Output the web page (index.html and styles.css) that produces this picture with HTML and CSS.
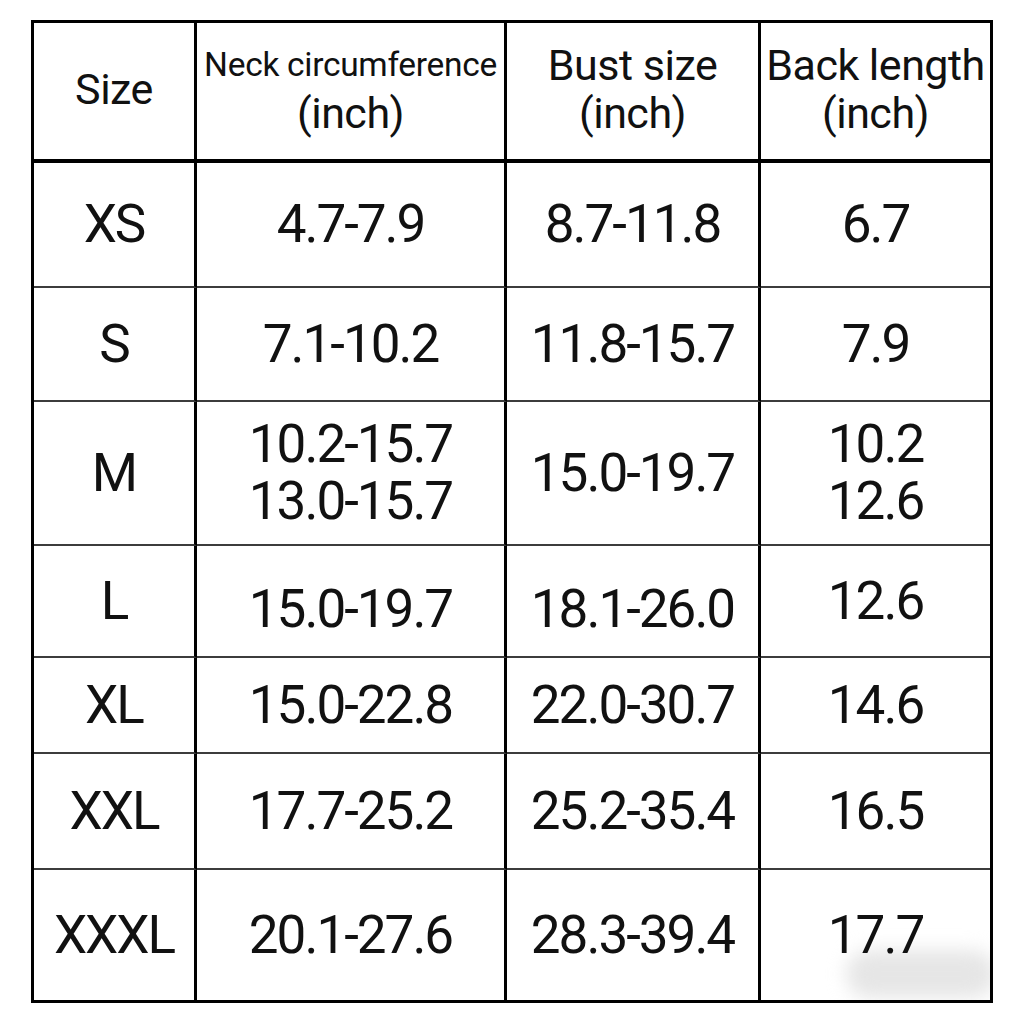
FILE: index.html
```html
<!DOCTYPE html>
<html lang="en">
<head>
<meta charset="utf-8">
<title>Size chart</title>
<link rel="stylesheet" href="styles.css">
</head>
<body>
<div class="chart">
  <div class="cell head"><span class="h-big">Size</span></div>
  <div class="cell head"><span class="h-small">Neck circumference</span><span class="h-big">(inch)</span></div>
  <div class="cell head"><span class="h-big">Bust size</span><span class="h-big">(inch)</span></div>
  <div class="cell head last"><span class="h-big">Back length</span><span class="h-big">(inch)</span></div>

  <div class="cell">XS</div>
  <div class="cell">4.7-7.9</div>
  <div class="cell">8.7-11.8</div>
  <div class="cell last">6.7</div>

  <div class="cell">S</div>
  <div class="cell">7.1-10.2</div>
  <div class="cell">11.8-15.7</div>
  <div class="cell last">7.9</div>

  <div class="cell">M</div>
  <div class="cell"><span>10.2-15.7</span><span>13.0-15.7</span></div>
  <div class="cell">15.0-19.7</div>
  <div class="cell last"><span>10.2</span><span>12.6</span></div>

  <div class="cell">L</div>
  <div class="cell low">15.0-19.7</div>
  <div class="cell low">18.1-26.0</div>
  <div class="cell last">12.6</div>

  <div class="cell">XL</div>
  <div class="cell">15.0-22.8</div>
  <div class="cell">22.0-30.7</div>
  <div class="cell last">14.6</div>

  <div class="cell">XXL</div>
  <div class="cell">17.7-25.2</div>
  <div class="cell">25.2-35.4</div>
  <div class="cell last">16.5</div>

  <div class="cell bottom">XXXL</div>
  <div class="cell bottom">20.1-27.6</div>
  <div class="cell bottom">28.3-39.4</div>
  <div class="cell bottom last smudged"><span class="smudge"></span><span class="val">17.7</span></div>
</div>
</body>
</html>
```

FILE: styles.css
```css
* {
  box-sizing: border-box;
}

html, body {
  margin: 0;
  background: #ffffff;
}

body {
  padding: 20px 0 0 31px;
  font-family: Roboto, "Liberation Sans", Arial, sans-serif;
  color: #111111;
}

.chart {
  width: 962px;
  display: grid;
  grid-template-columns: 163px 310px 254px 229px;
  grid-template-rows: 140px 125px 114px 144px 112px 96px 116px 130px;
  border: 3px solid #000000;
}

.cell {
  display: flex;
  flex-direction: column;
  align-items: center;
  justify-content: center;
  border-right: 3px solid #000000;
  border-bottom: 2px solid #3c3c3c;
  font-size: 53px;
  line-height: 57px;
  letter-spacing: -2px;
  white-space: nowrap;
}

.cell.last {
  border-right: none;
}

.cell.head {
  border-bottom: 4px solid #000000;
  letter-spacing: -0.5px;
  padding-bottom: 4px;
}

.cell.bottom {
  border-bottom: none;
}

.cell.low {
  padding-top: 16px;
}

.h-big {
  font-size: 43px;
  line-height: 48px;
}

.h-small {
  font-size: 33.5px;
  line-height: 48px;
  letter-spacing: -0.3px;
}

.smudged {
  position: relative;
  overflow: hidden;
}

.val {
  position: relative;
}

.smudge {
  position: absolute;
  right: -6px;
  bottom: 2px;
  width: 150px;
  height: 48px;
  background: #e6e6e6;
  filter: blur(9px);
  border-radius: 24px;
}
```
